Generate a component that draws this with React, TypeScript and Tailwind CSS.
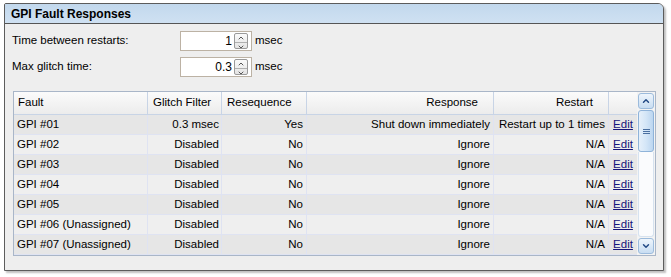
import { ChevronUp, ChevronDown } from 'lucide-react';

type Row = { fault: string; glitch: string; reseq: string; response: string; restart: string };

const ROWS: Row[] = [
  { fault: 'GPI #01', glitch: '0.3 msec', reseq: 'Yes', response: 'Shut down immediately', restart: 'Restart up to 1 times' },
  { fault: 'GPI #02', glitch: 'Disabled', reseq: 'No', response: 'Ignore', restart: 'N/A' },
  { fault: 'GPI #03', glitch: 'Disabled', reseq: 'No', response: 'Ignore', restart: 'N/A' },
  { fault: 'GPI #04', glitch: 'Disabled', reseq: 'No', response: 'Ignore', restart: 'N/A' },
  { fault: 'GPI #05', glitch: 'Disabled', reseq: 'No', response: 'Ignore', restart: 'N/A' },
  { fault: 'GPI #06 (Unassigned)', glitch: 'Disabled', reseq: 'No', response: 'Ignore', restart: 'N/A' },
  { fault: 'GPI #07 (Unassigned)', glitch: 'Disabled', reseq: 'No', response: 'Ignore', restart: 'N/A' },
];

function Spinner({ value }: { value: string }) {
  return (
    <div className="flex h-[20px] w-[72px] items-center border border-[#bcb2a4] bg-white text-[12px]">
      <span className="flex-1 pr-[2px] text-right">{value}</span>
      <div className="mr-[3px] flex h-[16px] w-[14px] flex-col overflow-hidden rounded-[2px] border border-[#9a9a9a] bg-gradient-to-b from-[#fafafa] to-[#e4e4e4]">
        <div className="flex flex-1 items-center justify-center border-b border-[#b0b0b0] text-[#555]">
          <ChevronUp className="h-[8px] w-[8px]" strokeWidth={3} />
        </div>
        <div className="flex flex-1 items-center justify-center text-[#555]">
          <ChevronDown className="h-[8px] w-[8px]" strokeWidth={3} />
        </div>
      </div>
    </div>
  );
}

function Scrollbar() {
  return (
    <div className="flex h-full w-[18px] flex-col bg-[#f3f3f3] px-[1px] py-[1px]">
      <div className="flex h-[16px] items-center justify-center rounded-[3px] border border-[#9cbbdc] bg-gradient-to-b from-[#eef5fc] to-[#c8ddf2] text-[#244b86]">
        <ChevronUp className="h-[10px] w-[10px]" strokeWidth={3.5} />
      </div>
      <div className="mt-[1px] flex h-[42px] items-center justify-center rounded-[3px] border border-[#8fb3d9] bg-gradient-to-r from-[#e6f0fa] via-[#d4e6f7] to-[#bcd6f0]">
        <div className="flex flex-col gap-[1px]">
          <div className="h-[1px] w-[7px] bg-[#4a6fa0]" />
          <div className="h-[1px] w-[7px] bg-[#4a6fa0]" />
          <div className="h-[1px] w-[7px] bg-[#4a6fa0]" />
        </div>
      </div>
      <div className="mb-[1px] flex-1 rounded-b-[3px] border-x border-b border-[#d6e2ef] bg-[#fafbfd]" />
      <div className="flex h-[16px] items-center justify-center rounded-[3px] border border-[#9cbbdc] bg-gradient-to-b from-[#eef5fc] to-[#c8ddf2] text-[#244b86]">
        <ChevronDown className="h-[10px] w-[10px]" strokeWidth={3.5} />
      </div>
    </div>
  );
}

export default function App() {
  return (
    <div
      className="h-[277px] w-[671px] bg-white pl-[4px] pt-[3px] text-[11.5px] text-black"
      style={{ fontFamily: '"Liberation Sans", Arial, sans-serif' }}
    >
      <div className="h-[268px] w-[660px] overflow-hidden rounded-tl-[2px] rounded-tr-[6px] border border-[#5c5c5c] bg-[#eeeeee] shadow-[2px_2px_2px_rgba(0,0,0,0.25)]">
        {/* Title */}
        <div className="flex h-[20px] items-center border-b border-[#555] bg-gradient-to-b from-[#c2d8ed] to-[#cfe1f2] pl-[6px] text-[12px] font-bold">
          GPI Fault Responses
        </div>

        {/* Settings */}
        <div className="px-[7px] pt-[7px]">
          <div className="flex h-[20px] items-center">
            <span className="w-[168px]">Time between restarts:</span>
            <Spinner value="1" />
            <span className="ml-[3px]">msec</span>
          </div>
          <div className="mt-[6px] flex h-[20px] items-center">
            <span className="w-[168px]">Max glitch time:</span>
            <Spinner value="0.3" />
            <span className="ml-[3px]">msec</span>
          </div>
        </div>

        {/* Table */}
        <div className="ml-[8px] mt-[14px] flex h-[165px] w-[643px] border border-[#a9b6c8] bg-[#eeeeee]">
          <div className="w-[623px]">
            <div className="flex h-[23px] border-b border-[#c8d4e6] bg-gradient-to-b from-[#fbfbfb] to-[#ececec]">
              <div className="flex w-[134px] items-center border-r border-[#c8d4e6] pl-[4px]">Fault</div>
              <div className="flex w-[74px] items-center border-r border-[#c8d4e6] pl-[5px]">Glitch Filter</div>
              <div className="flex w-[85px] items-center border-r border-[#c8d4e6] pl-[5px]">Resequence</div>
              <div className="flex w-[187px] items-center justify-end border-r border-[#c8d4e6] pr-[15px]">Response</div>
              <div className="flex w-[115px] items-center justify-end border-r border-[#c8d4e6] pr-[15px]">Restart</div>
              <div className="w-[28px]" />
            </div>
            {ROWS.map((r, i) => (
              <div
                key={r.fault}
                className={`flex h-[20px] border-b border-[#dfe3f2] ${i % 2 === 0 ? 'bg-[#e6e6e6]' : 'bg-[#efefef]'}`}
              >
                <div className="flex w-[134px] items-center border-r border-[#dfe3f2] pl-[3px]">{r.fault}</div>
                <div className="flex w-[74px] items-center justify-end border-r border-[#dfe3f2] pr-[2px]">{r.glitch}</div>
                <div className="flex w-[85px] items-center justify-end border-r border-[#dfe3f2] pr-[3px]">{r.reseq}</div>
                <div className="flex w-[187px] items-center justify-end border-r border-[#dfe3f2] pr-[3px]">{r.response}</div>
                <div className="flex w-[115px] items-center justify-end border-r border-[#dfe3f2] pr-[3px]">{r.restart}</div>
                <div className="flex w-[28px] items-center justify-center text-[#14147a] underline">Edit</div>
              </div>
            ))}
          </div>
          <Scrollbar />
        </div>
      </div>
    </div>
  );
}
